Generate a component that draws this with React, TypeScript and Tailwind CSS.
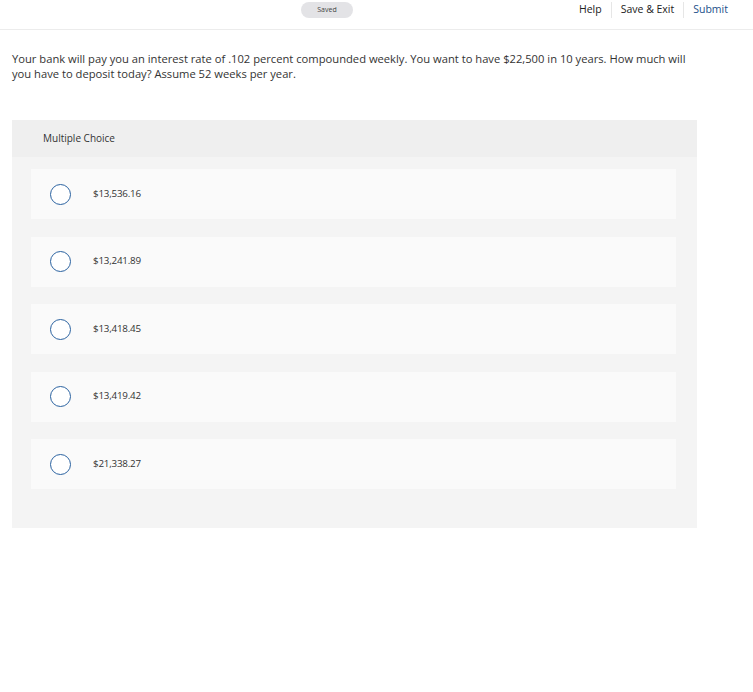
const choices = ['$13,536.16', '$13,241.89', '$13,418.45', '$13,419.42', '$21,338.27']

export default function App() {
  return (
    <div className="min-h-screen bg-white text-[#333]" style={{ fontFamily: '"Open Sans", "Liberation Sans", sans-serif' }}>
      {/* top bar */}
      <div className="h-[30px] border-b border-[#ececec] flex items-start relative">
        <div className="absolute left-[301px] top-[2px] w-[52px] h-[16px] rounded-full bg-[#e3e3e6] flex items-center justify-center text-[7px] text-[#444]">
          Saved
        </div>
        <div className="ml-auto flex items-center h-[19px] pr-[25px] text-[10.5px]">
          <span className="text-[#222] pr-[9px]">Help</span>
          <span className="h-[16px] w-px bg-[#e6e6e6]" />
          <span className="text-[#222] px-[9px]">Save &amp; Exit</span>
          <span className="h-[16px] w-px bg-[#e6e6e6]" />
          <span className="text-[#1b4f8a] font-medium pl-[9px]">Submit</span>
        </div>
      </div>

      {/* question */}
      <p className="px-[12px] pt-[21px] pr-[50px] text-[11.2px] leading-[15px] text-[#333]">
        Your bank will pay you an interest rate of .102 percent compounded weekly. You want to have $22,500 in 10 years. How much will you have to deposit today? Assume 52 weeks per year.
      </p>

      {/* choices panel */}
      <div className="mt-[39px] ml-[12px] w-[685px] bg-[#f4f4f4] pb-[39px]">
        <div className="h-[37px] bg-[#efefef] flex items-center pl-[31px] text-[10px] text-[#333]">
          Multiple Choice
        </div>
        <div className="pl-[19px] pr-[21px] pt-[12px] flex flex-col gap-[17.5px]">
          {choices.map((c) => (
            <div key={c} className="h-[50px] bg-[#fafafa] flex items-center">
              <span className="ml-[19px] w-[21px] h-[21px] rounded-full border-[1.5px] border-[#2a62a0] bg-white" />
              <span className="ml-[22px] text-[9.8px] text-[#333] tracking-[-0.2px]">{c}</span>
            </div>
          ))}
        </div>
      </div>
    </div>
  )
}
